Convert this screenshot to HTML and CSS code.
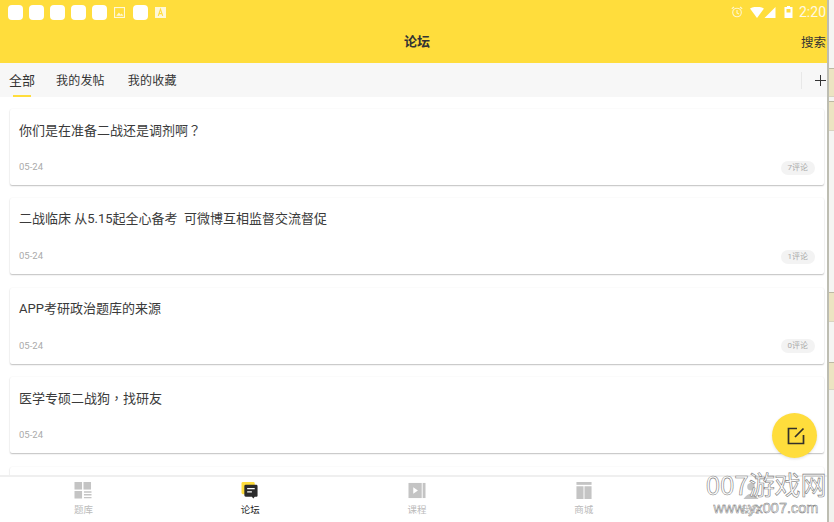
FILE: index.html
```html
<!DOCTYPE html>
<html lang="zh">
<head>
<meta charset="utf-8">
<title>论坛</title>
<link rel="stylesheet" href="styles.css">
</head>
<body>
<div class="window">
  <div class="app">
    <div class="status">
      <div class="notes">
        <i class="note"></i><i class="note"></i><i class="note"></i><i class="note"></i><i class="note"></i>
        <svg class="mini" viewBox="0 0 10 10"><rect x=".5" y=".5" width="9" height="9" fill="none" stroke="#fff"/><path d="M2 8l2.500-3 1.500 2 1-1 1.500 2z" fill="#fff"/></svg>
        <i class="note"></i>
        <svg class="mini" viewBox="0 0 10 10"><rect width="10" height="10" fill="#fff"/><path d="M3 8l2-6 2 6M3.800 6h2.400" fill="none" stroke="#ffdd3c"/></svg>
      </div>
      <div class="sys">
        <svg class="alarm" viewBox="0 0 12 12"><circle cx="6" cy="6.500" r="4.300" fill="none" stroke="#fff" stroke-width="1.100"/><path d="M6 4v3l2 1M.8 2.800L3 1M11.200 2.800L9 1" fill="none" stroke="#fff" stroke-width="1.100"/></svg>
        <svg class="wifi" viewBox="0 0 14 11"><path d="M0 1.500Q7-2 14 1.500L7 11z" fill="#fff"/></svg>
        <svg class="signal" viewBox="0 0 11 11"><path d="M11 0v11H0z" fill="#fff"/></svg>
        <svg class="batt" viewBox="0 0 8 12"><path d="M2.500 0h3v1H8v11H0V1h2.500z" fill="#fff"/><rect x="2" y="3" width="4" height="3.500" fill="#ffdd3c"/></svg>
        <span class="clock">2:20</span>
      </div>
    </div>
    <header class="bar">
      <span class="bar-title">论坛</span>
      <span class="bar-search">搜索</span>
    </header>
    <nav class="tabs">
      <span class="tab tab-on">全部</span>
      <span class="tab">我的发帖</span>
      <span class="tab">我的收藏</span>
      <span class="tab-add"><svg viewBox="0 0 11 11"><path d="M5.500 0v11M0 5.500h11" stroke="#333" fill="none"/></svg></span>
    </nav>
    <main class="list">
      <article class="card"><h2 class="card-title">你们是在准备二战还是调剂啊<span class="punct" lang="zh-Hant">？</span></h2><div class="card-foot"><time class="date">05-24</time><span class="count">7评论</span></div></article>
      <article class="card"><h2 class="card-title">二战临床 从5.15起全心备考&nbsp; 可微博互相监督交流督促</h2><div class="card-foot"><time class="date">05-24</time><span class="count">1评论</span></div></article>
      <article class="card"><h2 class="card-title">APP考研政治题库的来源</h2><div class="card-foot"><time class="date">05-24</time><span class="count">0评论</span></div></article>
      <article class="card"><h2 class="card-title">医学专硕二战狗<span class="punct" lang="zh-Hant">，</span>找研友</h2><div class="card-foot"><time class="date">05-24</time></div></article>
      <article class="card"></article>
    </main>
    <footer class="nav">
      <div class="nav-item"><svg class="nav-icon" viewBox="0 0 18 18"><rect width="8" height="8" fill="#c4c4c4"/><rect x="9.500" width="8" height="8" fill="#c4c4c4"/><rect y="9.500" width="8" height="8" fill="#c4c4c4"/><path d="M10 10.500h8M10 13.500h8M10 16.500h8" stroke="#c4c4c4" stroke-width="1.500"/></svg><span>题库</span></div>
      <div class="nav-item nav-on"><svg class="nav-icon" viewBox="0 0 18 18"><rect width="14" height="13" rx="1.500" fill="#ffdd3c"/><path d="M4.500 3h11A1.500 1.500 0 0 1 17 4.500v10a1 1 0 0 1-1 1h-2l-1.500 2-1.500-2H4.500A1.500 1.500 0 0 1 3 14V4.500A1.500 1.500 0 0 1 4.500 3z" fill="#2b2b2b"/><path d="M6 7h8M6 10.500h5" stroke="#fff" stroke-width="1.300"/></svg><span>论坛</span></div>
      <div class="nav-item"><svg class="nav-icon" viewBox="0 0 18 18"><rect y="1" width="14" height="16" fill="#c4c4c4"/><path d="M5 5.500l5 3.500-5 3.500z" fill="#fff"/><rect x="15" y="1" width="3" height="16" fill="#c4c4c4"/></svg><span>课程</span></div>
      <div class="nav-item"><svg class="nav-icon" viewBox="0 0 18 18"><rect x="1" y="0" width="16" height="3" fill="#c4c4c4"/><rect x="1" y="4.500" width="7.500" height="13.500" fill="#c4c4c4"/><rect x="9.500" y="4.500" width="7.500" height="13.500" fill="#c4c4c4"/></svg><span>商城</span></div>
      <div class="nav-item"><svg class="nav-icon" viewBox="0 0 18 18"><circle cx="9" cy="5" r="4" fill="#c4c4c4"/><path d="M1 18q8-11 16 0z" fill="#c4c4c4"/></svg><span>我的</span></div>
    </footer>
    <button class="fab" type="button" aria-label="发帖"><svg viewBox="0 0 18 18"><path d="M10 1.500H1.500v15h15V8" fill="none" stroke="#33302a" stroke-width="1.700"/><path d="M8 10l8.500-8.500" fill="none" stroke="#33302a" stroke-width="1.700"/></svg></button>
    <div class="mark"><div class="mark-big">007游戏网</div><div class="mark-url">www.yx007.com</div></div>
  </div>
  <aside class="strip">
    <i class="strip-gap g1"></i><i class="strip-tan t1"></i><i class="strip-gap g2"></i><i class="strip-tan t2"></i><i class="strip-gap g3"></i><i class="strip-tan t3"></i><i class="strip-gap g4"></i><i class="strip-tan t4"></i>
  </aside>
</div>
</body>
</html>
```
FILE: styles.css
```css
* { box-sizing: border-box; }
html, body { margin: 0; padding: 0; }
body { width: 834px; height: 522px; overflow: hidden; background: #fff; font-family: "Roboto", "Noto Sans CJK SC", sans-serif; }
i { display: block; }
.window { position: relative; width: 834px; height: 522px; }
.app { position: relative; width: 834px; height: 522px; display: flex; flex-direction: column; overflow: hidden; }

.status { height: 24px; background: #ffdd3c; display: flex; justify-content: space-between; align-items: center; padding: 0 8px 0 8px; flex: none; }
.notes { display: flex; align-items: center; gap: 6px; }
.note { width: 15px; height: 15px; border-radius: 4px; background: #fff; }
.mini { width: 11px; height: 11px; opacity: .8; margin: 0 2px 0 1px; }
.sys { display: flex; align-items: center; }
.alarm { width: 12px; height: 12px; opacity: .75; margin-right: 7px; }
.wifi { width: 14px; height: 11px; }
.signal { width: 12px; height: 11px; margin-right: 8px; }
.batt { width: 9px; height: 12px; margin-right: 6px; }
.clock { color: #fff; font-size: 14px; opacity: .85; }

.bar { height: 39px; background: #ffdd3c; display: flex; align-items: center; justify-content: center; position: relative; flex: none; padding-bottom: 6px; }
.bar-title { font-size: 13px; font-weight: 700; color: #333; }
.bar-search { position: absolute; right: 8px; top: 11px; font-size: 12.500px; line-height: 16px; color: #333; }

.tabs { height: 34px; background: #f7f7f7; display: flex; align-items: center; padding-left: 9px; flex: none; position: relative; }
.tab { font-size: 12px; color: #333; margin-right: 23px; position: relative; line-height: 36px; height: 34px; letter-spacing: .2px; }
.tab-on { font-size: 13px; margin-right: 21px; letter-spacing: 0; }
.tab-on::after { content: ""; position: absolute; left: 4px; right: 4px; bottom: 0; height: 2px; background: #ffdd3c; }
.tab-add { position: absolute; right: 7px; top: 9px; width: 26px; height: 17px; border-left: 1px solid #e8e8e8; display: flex; align-items: center; justify-content: flex-end; padding-right: 1px; }
.tab-add svg { width: 11px; height: 11px; }

.list { flex: 1; min-height: 0; overflow: hidden; background: #fff; padding: 12px 10px 0 10px; display: flex; flex-direction: column; gap: 13.400px; }
.card { flex: none; height: 76px; background: #fff; border-radius: 2px; box-shadow: 0 1px 1.500px rgba(0,0,0,.24), 0 0 2px rgba(0,0,0,.05); padding: 12px 9px 0; display: flex; flex-direction: column; }
.card-title { margin: 0; font-size: 13px; font-weight: 400; line-height: 17px; color: #3a3a3a; }
.punct { font-family: "Noto Sans CJK TC", sans-serif; }
.card-foot { margin-top: auto; height: 17px; margin-bottom: 9px; display: flex; align-items: center; justify-content: space-between; }
.date { font-size: 9.500px; color: #aaa; padding-bottom: 2px; }
.count { font-size: 8px; color: #aaa; background: #f3f3f3; height: 14px; line-height: 14px; padding: 0 7px; border-radius: 7px; }

.nav { height: 47px; flex: none; background: #fff; border-top: 2px solid #efefef; display: flex; position: relative; z-index: 1; }
.nav-item { flex: 1; display: flex; flex-direction: column; align-items: center; padding-top: 5px; font-size: 9.500px; color: #bbb; }
.nav-item span { line-height: 12px; margin-top: 5px; }
.nav-on { color: #222; }
.nav-icon { width: 18px; height: 17px; display: block; }

.fab { position: absolute; left: 772px; top: 413px; width: 45px; height: 45px; padding: 0 0 0 2px; border: 0; border-radius: 50%; background: #ffdd3c; box-shadow: 0 1px 3px rgba(0,0,0,.12); display: flex; align-items: center; justify-content: center; z-index: 2; }
.fab svg { width: 18px; height: 18px; }

.mark { position: absolute; left: 704px; top: 468px; width: 124px; z-index: 3; color: #fff; text-align: center; white-space: nowrap; }
.mark-big { font-family: "Noto Sans CJK SC", sans-serif; font-size: 26px; line-height: 32px; -webkit-text-stroke: .6px #808080; letter-spacing: -.1px; }
.mark-url { font-family: "Liberation Sans", sans-serif; font-size: 14.500px; line-height: 16px; -webkit-text-stroke: .5px #777; }

.strip { position: absolute; top: 0; right: 0; width: 7px; height: 522px; background: #f2f2ee; border-left: 2px solid #bdbdb2; display: flex; flex-direction: column; z-index: 4; }
.strip-gap { flex: none; background: #f5f5f2; }
.strip-tan { flex: none; background: #ece4c2; border-top: 1px solid #bdb9a3; border-bottom: 1px solid #d8d4c0; }
.g1 { height: 68px; }
.t1 { height: 29px; }
.g2 { height: 4px; }
.t2 { height: 30px; }
.g3 { height: 161px; }
.t3 { height: 30px; }
.g4 { height: 40px; }
.t4 { height: 28px; }
```
